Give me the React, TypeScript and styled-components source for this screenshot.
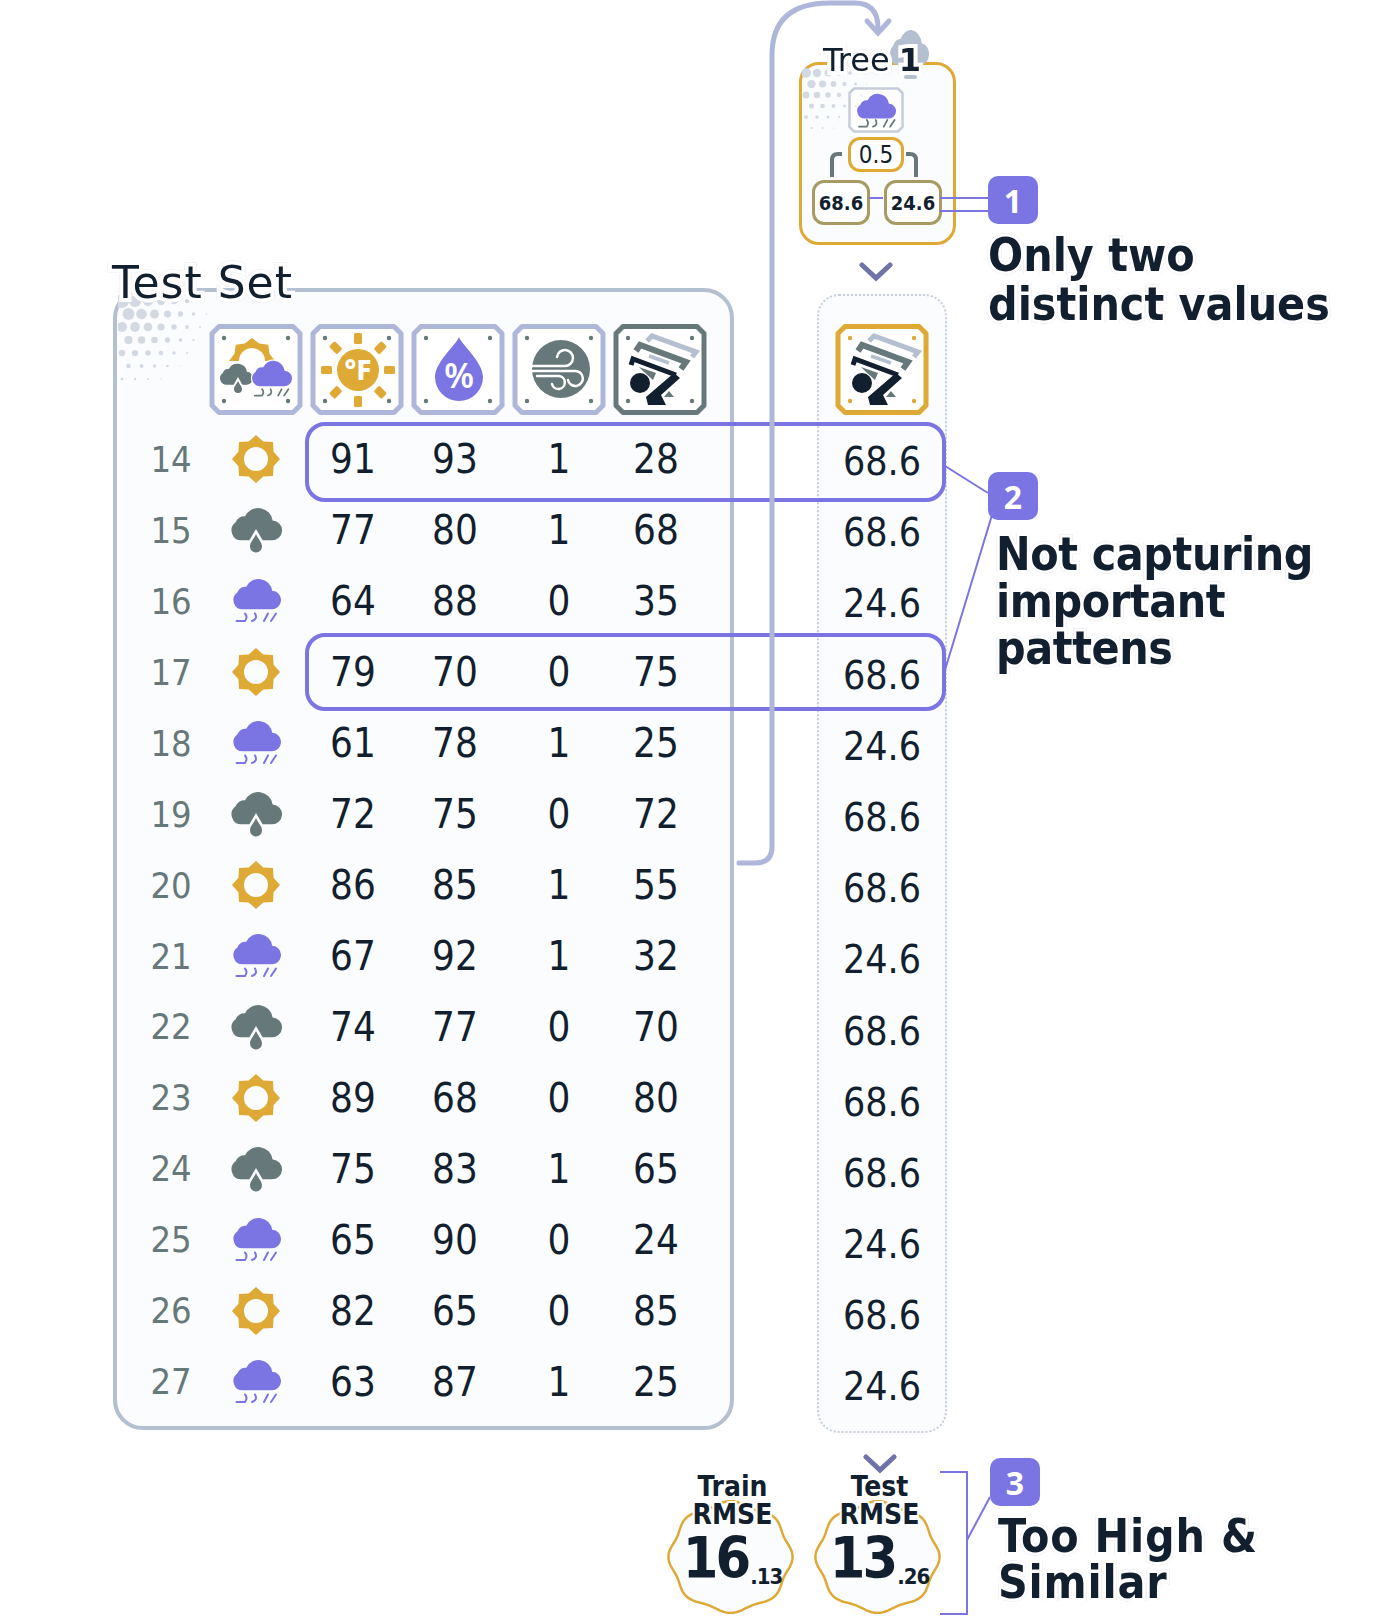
import React from 'react'
import styled, { createGlobalStyle } from 'styled-components'

const NAVY = '#121f2f'
const SLATE = '#66787a'
const GOLD = '#dfa936'
const PURPLE = '#7b74e3'
const STEEL = '#b4bfd0'
const FRAME = '#aeb6da'
const PANEL = '#fbfcfe'

const GlobalStyle = createGlobalStyle`
    html, body {
        margin: 0;
        padding: 0;
        background: #fff;
    }
    body {
        font-family: "DejaVu Sans Condensed", "DejaVu Sans", sans-serif;
        color: ${NAVY};
    }
`

const Page = styled.div`
    position: relative;
    width: 1400px;
    height: 1617px;
    overflow: hidden;
`

const Overlay = styled.svg`
    position: absolute;
    left: 0;
    top: 0;
    pointer-events: none;
`

const TopRow = styled.div`
    display: flex;
    align-items: flex-start;
    height: 1433px;
    padding-left: 113px;
`

const TestPanel = styled.section`
    position: relative;
    box-sizing: border-box;
    width: 621px;
    height: 1142px;
    margin-top: 288px;
    padding: 32px 0 0 16px;
    background: ${PANEL};
    border: 4px solid ${STEEL};
    border-radius: 30px;
`

const Halo = styled.h2`
    position: absolute;
    margin: 0;
    font-family: "DejaVu Sans", sans-serif;
    font-stretch: normal;
    font-weight: 400;
    white-space: nowrap;
    -webkit-text-stroke: 8px #fff;
    paint-order: stroke fill;
    filter: drop-shadow(0 0 0.6px #c4c9ea);
`

const PanelTitle = styled(Halo)`
    left: -5px;
    top: -37px;
    font-size: 44px;
    letter-spacing: 1px;
    line-height: 56px;
`

const Halftone = styled.svg`
    position: absolute;
    left: 1px;
    top: 1px;
`

const Grid = styled.div`
    display: grid;
    grid-template-columns: 68px repeat(5, 92px);
    column-gap: 9px;
    align-items: center;
    justify-items: center;
`

const HeaderRow = styled(Grid)`
    height: 91px;
    margin-bottom: 9px;
`

const DataRow = styled(Grid)`
    height: 70.95px;
`

const RowId = styled.span`
    margin-left: 8px;
    font-size: 36px;
    font-weight: 300;
    color: ${SLATE};
`

const Cell = styled.span<{ $nudge?: number }>`
    font-size: 40px;
    margin-right: ${p => p.$nudge ?? 0}px;
`

const Highlight = styled.div<{ $top: number; $height: number }>`
    position: absolute;
    box-sizing: border-box;
    left: 305px;
    top: ${p => p.$top}px;
    width: 641px;
    height: ${p => p.$height}px;
    border: 4px solid ${PURPLE};
    border-radius: 20px;
`

const PredColumn = styled.div`
    width: 157px;
    margin-left: 65px;
`

const TreeCard = styled.section`
    position: relative;
    box-sizing: border-box;
    width: 157px;
    height: 183px;
    margin-top: 62px;
    padding: 22px 3px 0 0;
    display: flex;
    flex-direction: column;
    align-items: center;
    background: ${PANEL};
    border: 3px solid ${GOLD};
    border-radius: 20px;
`

const TreeTitle = styled(Halo)`
    left: 21px;
    top: -25px;
    font-size: 32px;
    line-height: 40px;

    b {
        font-weight: 700;
        margin-left: 9px;
    }
`

const TreeCloud = styled.svg`
    position: absolute;
    left: 87px;
    top: -36px;
`

const TreeHalftone = styled.svg`
    position: absolute;
    left: 0;
    top: 0;
`

const Node = styled.div<{ $leaf?: boolean }>`
    box-sizing: border-box;
    display: flex;
    align-items: center;
    justify-content: center;
    width: ${p => (p.$leaf ? 58 : 56)}px;
    height: ${p => (p.$leaf ? 45 : 35)}px;
    font-size: ${p => (p.$leaf ? 20 : 24)}px;
    font-weight: ${p => (p.$leaf ? 600 : 400)};
    background: #fff;
    border: 3px solid ${p => (p.$leaf ? '#a89a62' : GOLD)};
    border-radius: 12px;
`

const RootNode = styled(Node)`
    margin-top: 4px;
`

const Leaves = styled.div`
    display: flex;
    gap: 14px;
    margin: 8px 0 0 2px;
`

const ChevronSlot = styled.div`
    display: flex;
    justify-content: center;
    height: 49px;
    padding: 17px 3px 0 0;
    box-sizing: border-box;
`

const PredPanel = styled.section`
    box-sizing: border-box;
    width: 130px;
    height: 1139px;
    margin-left: 18px;
    padding-top: 28px;
    display: flex;
    flex-direction: column;
    align-items: center;
    background: ${PANEL};
    border: 2px dotted #c6cdd9;
    border-radius: 22px;
`

const PredHead = styled.div`
    height: 91px;
    margin-bottom: 11px;
`

const PredValue = styled.div`
    height: 71.2px;
    line-height: 71.2px;
    font-size: 39px;
`

const Callouts = styled.aside`
    margin-left: 32px;
    display: flex;
    flex-direction: column;
    align-items: flex-start;
`

const NumberBadge = styled.div`
    display: flex;
    align-items: center;
    justify-content: center;
    width: 50px;
    height: 48px;
    color: #fff;
    font-family: "Noto Sans", sans-serif;
    font-size: 32px;
    font-weight: 700;
    background: ${PURPLE};
    border-radius: 10px;
`

const FirstBadge = styled(NumberBadge)`
    margin-top: 176px;
`

const SecondBadge = styled(NumberBadge)`
    margin-top: 143px;
`

const CalloutText = styled.p<{ $indent?: number; $lead?: number; $gap?: number; $spacing?: number }>`
    margin: ${p => p.$gap ?? 7}px 0 0 ${p => p.$indent ?? 0}px;
    font-size: 46px;
    font-weight: 700;
    letter-spacing: ${p => p.$spacing ?? 0}px;
    line-height: ${p => p.$lead ?? 47}px;
    white-space: nowrap;
    -webkit-text-stroke: 6px #fff;
    paint-order: stroke fill;
    filter: drop-shadow(0 0 0.6px #c4c9ea);
`

const BottomRow = styled.div`
    display: flex;
    align-items: flex-start;
    padding-left: 669px;
    gap: 20px;
`

const Metric = styled.div`
    position: relative;
    width: 127px;
    height: 140px;
    margin-top: 40px;
    display: flex;
    flex-direction: column;
    align-items: center;
`

const MetricShape = styled.svg`
    position: absolute;
    left: -2px;
    top: 27px;
`

const MetricLabel = styled.div`
    position: relative;
    font-size: 28px;
    font-weight: 600;
    line-height: 28px;
    -webkit-text-stroke: 4px #fff;
    paint-order: stroke fill;
`

const MetricValue = styled.div`
    position: relative;
    margin-top: -2px;
    font-size: 57px;
    font-weight: 700;
    letter-spacing: -3px;
    line-height: 62px;
    white-space: nowrap;

    small {
        position: relative;
        top: 6px;
        margin-left: 2px;
        font-size: 22px;
        letter-spacing: -1px;
    }
`

const MetricChevron = styled.svg`
    position: absolute;
    left: 47px;
    top: -19px;
`

const LastCallout = styled.div`
    margin: 25px 0 0 27px;
    display: flex;
    flex-direction: column;
    align-items: flex-start;
`

// ---- drawings ----

const starPath = (cx: number, cy: number, outer: number, inner: number, points = 8) => {
    const out: string[] = []
    for (let i = 0; i < points * 2; i++) {
        const a = (Math.PI * i) / points - Math.PI / 2
        const r = i % 2 === 0 ? outer : inner
        out.push(`${(cx + r * Math.cos(a)).toFixed(2)} ${(cy + r * Math.sin(a)).toFixed(2)}`)
    }
    return `M${out.join('L')}Z`
}

const circlePath = (cx: number, cy: number, r: number) =>
    `M${cx - r} ${cy}a${r} ${r} 0 1 0 ${r * 2} 0a${r} ${r} 0 1 0 ${-r * 2} 0Z`

const CLOUD = 'M22 64A19 19 0 0 1 11 29.500A17 17 0 0 1 29 18A28 28 0 0 1 82 26A19 19 0 0 1 80 64Z'

const Sun = () => (
    <svg width="48" height="48" viewBox="0 0 48 48">
        <path fillRule="evenodd" fill={GOLD} d={starPath(24, 24, 24, 19) + circlePath(24, 24, 12)} />
    </svg>
)

const Storm = () => (
    <svg width="52" height="46" viewBox="0 0 52 46">
        <g transform="scale(.52)">
            <path fill={SLATE} d={CLOUD} />
        </g>
        <path fill="#fbfcfe" d="M26 22L33 34H19Z" />
        <path fill={SLATE} d="M26 27C28 32 32 35 32 39.500A6 6 0 0 1 20 39.500C20 35 24 32 26 27Z" />
    </svg>
)

const RainMarks = ({ color = PURPLE }: { color?: string }) => (
    <g fill="none" stroke={color} strokeWidth="2" strokeLinecap="round">
        <path d="M4.500 43H13Q16 39 13 35.500" />
        <path d="M20 43Q26 41 23 35.500" />
        <path d="M32 43L36 35.500" />
        <path d="M39 43L44 35.500" />
    </g>
)

const Rain = () => (
    <svg width="49" height="46" viewBox="0 0 49 46">
        <g transform="scale(.49)">
            <path fill={PURPLE} d={CLOUD} />
        </g>
        <RainMarks />
    </svg>
)

const Frame = ({ color = FRAME, children }: { color?: string; children?: React.ReactNode }) => (
    <svg width="92" height="91" viewBox="0 0 92 91" overflow="visible">
        <path d="M9 2.500H83L90 9.500V81.500L83 88.500H9L2 81.500V9.500Z" fill="#fff" stroke={color} strokeWidth="5" strokeLinejoin="round" />
        {[[14, 14], [78, 14], [14, 77], [78, 77]].map(([x, y]) => (
            <circle key={x * 100 + y} cx={x} cy={y} r="2.200" fill={color === GOLD ? GOLD : SLATE} />
        ))}
        {children}
    </svg>
)

const WeatherHead = () => (
    <Frame>
        <clipPath id="arcClip"><rect x="0" y="0" width="92" height="37" /></clipPath>
        <path clipPath="url(#arcClip)" fillRule="evenodd" fill={GOLD} d={starPath(42, 37, 23, 19) + circlePath(42, 37, 13)} />
        <g transform="translate(9 39) scale(.34)"><path fill={SLATE} d={CLOUD} /></g>
        <path fill="#fff" d="M28 53L33 62H23Z" />
        <path fill={SLATE} d="M28 57C29 60 32 62 32 65A4 4 0 0 1 24 65C24 62 27 60 28 57Z" />
        <g transform="translate(41 36) scale(.41)"><path fill={PURPLE} stroke="#fff" strokeWidth="6" paintOrder="stroke" d={CLOUD} /></g>
        <g transform="translate(41 35) scale(.85)"><RainMarks color={SLATE} /></g>
    </Frame>
)

const TempHead = () => (
    <Frame>
        <circle cx="47" cy="46" r="21" fill={GOLD} />
        {[0, 45, 90, 135, 180, 225, 270, 315].map(a => (
            <rect key={a} x="43" y="9" width="8" height="11" rx="1.500" fill={GOLD} transform={`rotate(${a} 47 46)`} />
        ))}
        <text x="47" y="56" textAnchor="middle" fontFamily="Noto Sans" fontWeight="800" fontSize="28" fill="#fff">°F</text>
    </Frame>
)

const HumidHead = () => (
    <Frame>
        <path d="M47 13C49 20 71 38 71 53A24 24 0 0 1 23 53C23 38 45 20 47 13Z" fill={PURPLE} />
        <text x="47" y="64" textAnchor="middle" fontFamily="Noto Sans" fontWeight="600" fontSize="34" fill="#fff">%</text>
    </Frame>
)

const WindHead = () => (
    <Frame>
        <circle cx="48" cy="45" r="29" fill={SLATE} />
        <g fill="none" stroke="#fff" strokeWidth="2.500" strokeLinecap="round">
            <path d="M19 42H52A8 8 0 1 0 44 33" />
            <path d="M19 47H62A7.500 7.500 0 1 1 55 56" />
            <path d="M24 52H46A6.500 6.500 0 1 1 39 60" />
        </g>
    </Frame>
)

const TargetHead = ({ color }: { color: string }) => (
    <Frame color={color}>
        <path d="M33 17L38 12L82 28L78 33" fill="none" stroke={STEEL} strokeWidth="5" />
        <path d="M22 27L26 21L72 38L67 45" fill="none" stroke={SLATE} strokeWidth="6" />
        <path d="M35 32L55 39" stroke={STEEL} strokeWidth="3.500" />
        <path d="M25 43L42 49L39 56L30 48Z" fill={SLATE} />
        <path d="M55 67L60 73H50Z" fill={SLATE} />
        <path d="M17 41L19 35L62 51" fill="none" stroke={NAVY} strokeWidth="5" />
        <path d="M60 49L66 54L47 71L52 81H34L32 73Z" fill={NAVY} />
        <circle cx="26" cy="59" r="10" fill={NAVY} />
    </Frame>
)

const Dots = ({ width, height, max, pitch }: { width: number; height: number; max: number; pitch: number }) => {
    const dots: React.ReactNode[] = []
    for (let y = 0; y < height; y += pitch) {
        for (let x = 0; x < width; x += pitch) {
            const off = (y / pitch) % 2 ? pitch / 2 : 0
            const d = Math.hypot(x + off, y) / Math.min(width, height)
            const r = max * (1 - d)
            if (r > 0.5) dots.push(<circle key={`${x}-${y}`} cx={x + off + 4} cy={y + 8} r={r} fill="#d3d9e3" />)
        }
    }
    return <>{dots}</>
}

const Chevron = () => (
    <svg width="34" height="20" viewBox="0 0 34 20">
        <path d="M3 3L17 16L31 3" fill="none" stroke="#6f73a8" strokeWidth="5" strokeLinecap="round" />
    </svg>
)

const metricPath = () => {
    const pts: string[] = []
    for (let i = 0; i <= 240; i++) {
        const a = (i / 240) * Math.PI * 2
        const r = 1 + 0.035 * Math.cos(a * 8)
        pts.push(`${(63.5 + 60 * r * Math.cos(a)).toFixed(1)} ${(57 + 54 * r * Math.sin(a)).toFixed(1)}`)
    }
    return `M${pts.join('L')}Z`
}

const rows = [
    [14, 'sun', 91, 93, 1, 28, '68.6'],
    [15, 'storm', 77, 80, 1, 68, '68.6'],
    [16, 'rain', 64, 88, 0, 35, '24.6'],
    [17, 'sun', 79, 70, 0, 75, '68.6'],
    [18, 'rain', 61, 78, 1, 25, '24.6'],
    [19, 'storm', 72, 75, 0, 72, '68.6'],
    [20, 'sun', 86, 85, 1, 55, '68.6'],
    [21, 'rain', 67, 92, 1, 32, '24.6'],
    [22, 'storm', 74, 77, 0, 70, '68.6'],
    [23, 'sun', 89, 68, 0, 80, '68.6'],
    [24, 'storm', 75, 83, 1, 65, '68.6'],
    [25, 'rain', 65, 90, 0, 24, '24.6'],
    [26, 'sun', 82, 65, 0, 85, '68.6'],
    [27, 'rain', 63, 87, 1, 25, '24.6'],
] as const

const weatherIcon = { sun: <Sun />, storm: <Storm />, rain: <Rain /> }

const MetricBadge = ({ label, whole, frac, chevron }: { label: string; whole: string; frac: string; chevron?: boolean }) => (
    <Metric>
        {chevron && (
            <MetricChevron width="34" height="20" viewBox="0 0 34 20">
                <path d="M3 3L17 16L31 3" fill="none" stroke="#6f73a8" strokeWidth="5" strokeLinecap="round" />
            </MetricChevron>
        )}
        <MetricShape width="127" height="114" viewBox="0 0 127 114">
            <path d={metricPath()} fill={PANEL} stroke={GOLD} strokeWidth="2.500" />
        </MetricShape>
        <MetricLabel>{label}</MetricLabel>
        <MetricLabel>RMSE</MetricLabel>
        <MetricValue>{whole}<small>{frac}</small></MetricValue>
    </Metric>
)

const App: React.FC = () => (
    <Page>
        <GlobalStyle />
        <TopRow>
            <TestPanel>
                <Halftone width="96" height="96" viewBox="0 0 96 96">
                    <Dots width={96} height={96} max={7} pitch={13} />
                </Halftone>
                <PanelTitle>Test Set</PanelTitle>
                <HeaderRow>
                    <span />
                    <WeatherHead />
                    <TempHead />
                    <HumidHead />
                    <WindHead />
                    <TargetHead color={SLATE} />
                </HeaderRow>
                {rows.map(([id, weather, temp, humid, wind, target]) => (
                    <DataRow key={id}>
                        <RowId>{id}</RowId>
                        {weatherIcon[weather]}
                        <Cell $nudge={8}>{temp}</Cell>
                        <Cell $nudge={6}>{humid}</Cell>
                        <Cell>{wind}</Cell>
                        <Cell $nudge={8}>{target}</Cell>
                    </DataRow>
                ))}
            </TestPanel>
            <PredColumn>
                <TreeCard>
                    <TreeHalftone width="70" height="90" viewBox="0 0 70 90">
                        <Dots width={70} height={90} max={5} pitch={11} />
                    </TreeHalftone>
                    <TreeCloud width="40" height="52" viewBox="0 0 40 52">
                        <g transform="scale(.4 .56)"><path fill={STEEL} d={CLOUD} /></g>
                        <rect x="15" y="46" width="13" height="4" rx="2" fill={STEEL} />
                    </TreeCloud>
                    <TreeTitle>Tree<b>1</b></TreeTitle>
                    <svg width="56" height="46" viewBox="0 0 56 46">
                        <path d="M6 1.500H50L54.500 6V40L50 44.500H6L1.500 40V6Z" fill="#fff" stroke="#c6cdd9" strokeWidth="2.500" />
                        <g transform="translate(8 6) scale(.4)"><path fill={PURPLE} d={CLOUD} /></g>
                        <g transform="translate(7 1) scale(.9 .9)"><RainMarks color={SLATE} /></g>
                    </svg>
                    <RootNode>0.5</RootNode>
                    <Leaves>
                        <Node $leaf>68.6</Node>
                        <Node $leaf>24.6</Node>
                    </Leaves>
                </TreeCard>
                <ChevronSlot><Chevron /></ChevronSlot>
                <PredPanel>
                    <PredHead><TargetHead color={GOLD} /></PredHead>
                    {rows.map(row => (
                        <PredValue key={row[0]}>{row[6]}</PredValue>
                    ))}
                </PredPanel>
            </PredColumn>
            <Callouts>
                <FirstBadge>1</FirstBadge>
                <CalloutText $lead={49}>Only two<br />distinct values</CalloutText>
                <SecondBadge>2</SecondBadge>
                <CalloutText $indent={8} $lead={47} $gap={11} $spacing={-0.4}>Not capturing<br />important<br />pattens</CalloutText>
            </Callouts>
        </TopRow>
        <BottomRow>
            <MetricBadge label="Train" whole="16" frac=".13" />
            <MetricBadge label="Test" whole="13" frac=".26" chevron />
            <LastCallout>
                <NumberBadge>3</NumberBadge>
                <CalloutText $indent={8} $lead={46} $spacing={0.8}>Too High &amp;<br />Similar</CalloutText>
            </LastCallout>
        </BottomRow>
        <Highlight $top={422} $height={80} />
        <Highlight $top={633} $height={78} />
        <Overlay width="1400" height="1617" viewBox="0 0 1400 1617">
            <g fill="none" stroke={FRAME} strokeWidth="5" strokeLinecap="round">
                <path d="M739 863H755Q772 863 772 847V55Q772 3 830 3H855Q878 3 878 28" />
                <path d="M867 21L878 33L889 21" />
            </g>
            <g fill="none" stroke={SLATE} strokeWidth="4">
                <path d="M842 154H838Q832 154 832 160V177" />
                <path d="M906 154H910Q916 154 916 160V177" />
            </g>
            <g fill="none" stroke={PURPLE} strokeWidth="2">
                <path d="M869 198H883M940 198H988M940 211H988" />
                <path d="M945 466L988 493M945 670L992 515" />
                <path d="M940 1472H967V1614H940M967 1540L990 1497" />
            </g>
        </Overlay>
    </Page>
)

export default App
